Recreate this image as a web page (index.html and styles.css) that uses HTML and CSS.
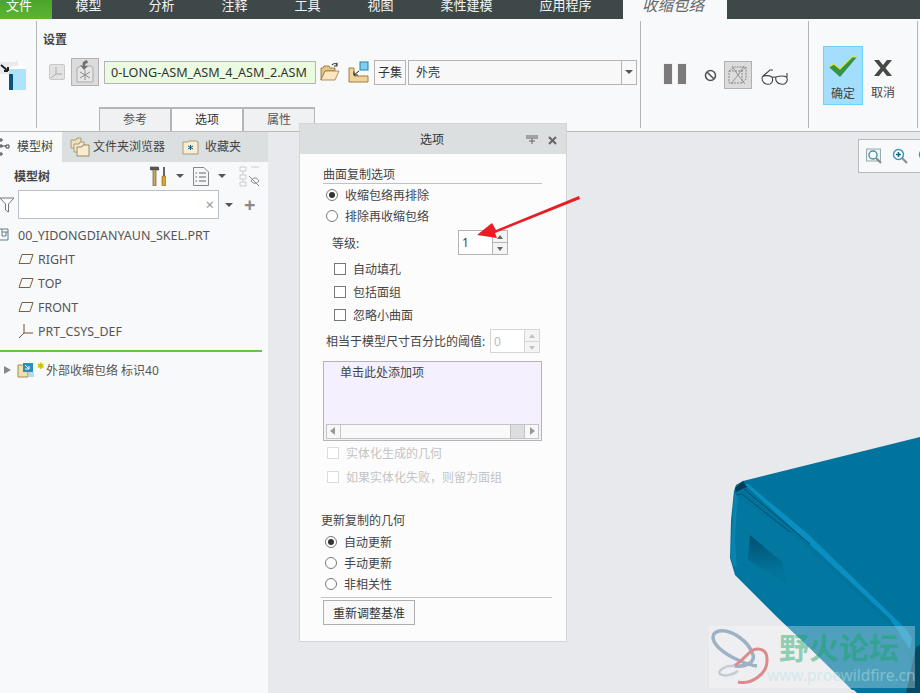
FILE: index.html
```html
<!DOCTYPE html>
<html lang="zh">
<head>
<meta charset="utf-8">
<title>收缩包络</title>
<link rel="stylesheet" href="styles.css">
</head>
<body>
<div class="app">
  <nav class="topbar">
    <span class="tab file">文件</span>
    <span class="tab">模型</span>
    <span class="tab">分析</span>
    <span class="tab">注释</span>
    <span class="tab">工具</span>
    <span class="tab">视图</span>
    <span class="tab">柔性建模</span>
    <span class="tab">应用程序</span>
    <span class="tab active">收缩包络</span>
  </nav>

  <section class="ribbon">
    <div class="group g-first">
      <svg width="26" height="32" viewBox="0 0 26 32" class="first-icon">
        <path d="M0 2H15L18 0V10H9V14H0Z" fill="#e9ebec"/>
        <path d="M1 5L8 11M8 11V7M8 11H4" stroke="#222" stroke-width="2" fill="none"/>
        <rect x="9" y="9" width="17" height="21" fill="#ade3fb"/>
        <rect x="9" y="14" width="4" height="16" fill="#0b5478"/>
        <path d="M9 9L13 6H26V9Z" fill="#fff"/>
      </svg>
    </div>
    <div class="group g-settings">
      <h3 class="g-title">设置</h3>
      <div class="ref-row">
        <svg class="ic-axis" width="16" height="16" viewBox="0 0 16 16">
          <rect x=".5" y=".5" width="15" height="15" rx="1.5" fill="#e2e2e2" stroke="#c8c8c8"/>
          <path d="M7 3V10L2 14M7 10H13" stroke="#aaa" fill="none"/>
        </svg>
        <span class="tool-btn">
          <svg width="20" height="24" viewBox="0 0 20 24">
            <path d="M2 8L6 6H16L18 8V22H2Z" fill="#e6e6e6" stroke="#aaa"/>
            <path d="M10 10V20M5 12L15 18M15 12L5 18" stroke="#8d8d8d" fill="none"/>
            <path d="M12 0C8 1 7 3 8 6L5 5L9 10L13 6L10 6C10 4 11 3 13 3Z" fill="#707070"/>
          </svg>
        </span>
        <span class="ref-input">0-LONG-ASM_ASM_4_ASM_2.ASM</span>
        <svg class="ic-open" width="20" height="20" viewBox="0 0 20 20">
          <path d="M1 18V6H3L4 4H9L10 6H15V9H5Z" fill="#e8c486" stroke="#8d6c34" stroke-width=".8"/>
          <path d="M1 18L5 9H19L15 18Z" fill="#fbe7c2" stroke="#9a7a3e" stroke-width=".8"/>
          <path d="M12 3C14 1 16 1 17 3M17 0.8V4H14" fill="none" stroke="#333" stroke-width="1.1"/>
        </svg>
        <svg class="ic-shrink" width="21" height="22" viewBox="0 0 21 22">
          <path d="M1 21V7H6V15H20V21Z" fill="#f1d39e" stroke="#a07f44"/>
          <rect x="12" y="1" width="8" height="8" fill="#7fcdf0" stroke="#2f7fa5"/>
          <path d="M11 10L6 14M6 10.5V14H10" fill="none" stroke="#222"/>
        </svg>
        <span class="subset">子集</span>
        <span class="select">外壳<i class="select-btn"></i></span>
      </div>
      <div class="sub-tabs">
        <span class="sub-tab">参考</span>
        <span class="sub-tab current">选项</span>
        <span class="sub-tab">属性</span>
      </div>
    </div>
    <div class="group g-state">
      <span class="pause"><i></i><i></i></span>
      <svg class="ic-no" width="13" height="13" viewBox="0 0 13 13">
        <circle cx="6.5" cy="6.5" r="5" fill="none" stroke="#555" stroke-width="1.6"/>
        <path d="M3 3L10 10" stroke="#555" stroke-width="1.6"/>
      </svg>
      <span class="tool-btn state-btn">
        <svg width="20" height="20" viewBox="0 0 20 20">
          <path d="M1 6L6 2H18V14L14 18H1ZM1 6H14V18M14 6L18 2" fill="none" stroke="#888" stroke-dasharray="2 1"/>
          <path d="M4 1L10 10L16 1M3 19L10 10L17 19" fill="none" stroke="#777" stroke-width=".7"/>
        </svg>
      </span>
      <svg class="ic-glass" width="28" height="18" viewBox="0 0 28 18">
        <path d="M1 10C1 7 8 7 11 9C12 11 12 15 9 16C5 17 1 15 1 10ZM15 9C18 8 25 7 26 10C27 14 24 17 20 16C16 16 14 12 15 9ZM11 9.500C12 9 14 9 15 9.500M2 8L9 2H12M26 9V5" fill="#f7f9fb" stroke="#444" stroke-width="1.100"/>
      </svg>
    </div>
    <div class="group g-finish">
      <button class="big-btn ok">
        <svg width="30" height="22" viewBox="0 0 30 22">
          <path d="M1 11L6 8L12 13L24 1H29L12 21Z" fill="#369149"/>
          <path d="M1 11L6 8L12 13L24 1H29" fill="none" stroke="#d9e63a" stroke-width="1.200"/>
        </svg>
        <span>确定</span>
      </button>
      <button class="big-btn cancel">
        <svg width="20" height="16" viewBox="0 0 20 16">
          <path d="M1 0H6L10 5L14 0H19L12.500 8L19 16H14L10 11L6 16H1L7.500 8Z" fill="#484848"/>
        </svg>
        <span>取消</span>
      </button>
    </div>
  </section>

  <main class="main">
    <aside class="panel">
      <div class="panel-tabs">
        <span class="ptab on">
          <svg class="ic-tree" width="10" height="22" viewBox="0 0 10 22">
            <path d="M0 3H2V5H0ZM0 9H2V11H0ZM0 17H2V19H0Z M6 9H9V12H6Z" fill="none" stroke="#444"/>
            <path d="M2 10H6" stroke="#444"/>
          </svg>模型树</span>
        <span class="ptab">
          <svg class="ic-folders" width="20" height="20" viewBox="0 0 20 20">
            <path d="M1 3H6L7 1H11V11H1Z" fill="#f0e2c0" stroke="#a89a7a"/>
            <path d="M4 7H9L10 5H14V15H4Z" fill="#f4e8cc" stroke="#a89a7a"/>
            <path d="M7 10H12L13 8H19V19H7Z" fill="#f7ecd0" stroke="#9a8a66"/>
          </svg>文件夹浏览器</span>
        <span class="ptab">
          <svg class="ic-fav" width="17" height="15" viewBox="0 0 17 15">
            <path d="M1 2H6L7 1H14L16 2V14H1Z" fill="#fbeed0" stroke="#a89a7a"/>
            <path d="M8.500 5V10M6 6L11 9M11 6L6 9" stroke="#0a5d8f"/>
          </svg>收藏夹</span>
      </div>
      <div class="tree-head">
        <strong class="tree-title">模型树</strong>
        <svg class="ic-tools" width="16" height="20" viewBox="0 0 16 20">
          <path d="M0 1H8L9 4H6V20H3V4H1Z" fill="#c9a864" stroke="#6d5a35" stroke-width=".7"/>
          <path d="M0 1H9V4H0Z" fill="#555"/>
          <rect x="13" y="1" width="2" height="10" fill="#666"/>
          <rect x="12" y="10" width="4" height="10" rx="1" fill="#d9a632" stroke="#7a5b1a" stroke-width=".6"/>
        </svg>
        <i class="caret c1"></i>
        <svg class="ic-doc" width="16" height="19" viewBox="0 0 16 19">
          <path d="M.5.5H11L15.500 5V18.500H.5Z" fill="#f4f6f7" stroke="#888"/>
          <path d="M6 6H13M6 10H13M6 14H13M2.500 6H4M2.500 10H4M2.500 14H4" stroke="#666"/>
        </svg>
        <i class="caret c2"></i>
        <svg class="ic-hide" width="21" height="21" viewBox="0 0 21 21">
          <path d="M1 1H7V5H1ZM1 9H7V13H1ZM1 16H7V20H1ZM12 1H20M4 5V9M4 13V16" fill="none" stroke="#ccc"/>
          <path d="M12 15C14 11 18 11 20 15C18 18 14 18 12 15ZM10 10L20 20" fill="none" stroke="#8a8f92"/>
        </svg>
      </div>
      <div class="filter-row">
        <svg class="ic-funnel" width="14" height="16" viewBox="0 0 14 16">
          <path d="M0 1H14L8.500 7V15L5.500 13V7Z" fill="#fdfdfd" stroke="#777"/>
        </svg>
        <span class="filter-input"><span class="x">×</span></span>
        <i class="caret c3"></i>
        <span class="plus">+</span>
      </div>
      <ul class="tree">
        <li class="root">
          <svg width="10" height="14" viewBox="0 0 10 14" class="ic-part">
            <path d="M0 1H9V12H0M3 4H9M3 1V8H7V4" fill="none" stroke="#607d8b"/>
          </svg>00_YIDONGDIANYAUN_SKEL.PRT</li>
        <li><svg class="ic-plane" width="16" height="10" viewBox="0 0 16 10"><path d="M4 .5H15L12 9.500H1Z" fill="none" stroke="#7a6238"/></svg>RIGHT</li>
        <li><svg class="ic-plane" width="16" height="10" viewBox="0 0 16 10"><path d="M4 .5H15L12 9.500H1Z" fill="none" stroke="#7a6238"/></svg>TOP</li>
        <li><svg class="ic-plane" width="16" height="10" viewBox="0 0 16 10"><path d="M4 .5H15L12 9.500H1Z" fill="none" stroke="#7a6238"/></svg>FRONT</li>
        <li><svg class="ic-plane" width="16" height="16" viewBox="0 0 16 16"><path d="M6 1V10L1 15M6 10H15" fill="none" stroke="#6b5530"/></svg>PRT_CSYS_DEF</li>
      </ul>
      <div class="insert-line"></div>
      <div class="feature">
        <i class="expand"></i>
        <svg class="ic-feat" width="18" height="16" viewBox="0 0 18 16">
          <path d="M1 3H11V15H1Z" fill="#f3dfae" stroke="#a58a52"/>
          <rect x="6" y="1" width="10" height="9" fill="#2b8fbf"/>
          <rect x="12" y="10" width="5" height="5" fill="#a9e0f6"/>
          <path d="M8 3L12 7M8 7H12V4" fill="none" stroke="#fff"/>
        </svg>
        <span class="star">✱</span><span class="feat-name">外部收缩包络 标识40</span>
      </div>
    </aside>

    <div class="canvas">
      <div class="view-tools">
        <svg width="16" height="16" viewBox="0 0 16 16">
          <rect x=".5" y="1" width="14" height="12" fill="#eef1f2" stroke="#9aa"/>
          <circle cx="7" cy="7" r="4" fill="#fff" stroke="#3f93b0" stroke-width="1.400"/>
          <path d="M10 10L15 15" stroke="#888" stroke-width="2"/>
        </svg>
        <svg width="16" height="16" viewBox="0 0 16 16">
          <circle cx="6.500" cy="6.500" r="5" fill="#fff" stroke="#3f93b0" stroke-width="1.400"/>
          <path d="M4 6.500H9M6.500 4V9" stroke="#0a6f94" stroke-width="1.600"/>
          <path d="M10 10L15 15" stroke="#888" stroke-width="2"/>
        </svg>
        <svg width="16" height="16" viewBox="0 0 16 16">
          <circle cx="6.500" cy="6.500" r="5" fill="#fff" stroke="#3f93b0" stroke-width="1.400"/>
          <path d="M10 10L15 15" stroke="#888" stroke-width="2"/>
        </svg>
      </div>
      <svg class="model" width="200" height="263" viewBox="720 430 200 263">
        <defs>
          <linearGradient id="recess" x1="0" y1="0" x2="0" y2="1">
            <stop offset="0" stop-color="#02506f"/>
            <stop offset=".75" stop-color="#02749c"/>
          </linearGradient>
        </defs>
        <path d="M920 437L743 481L736 485L734 491L731 520L730 558L735 575L777 617L857 693H920Z" fill="#00749d"/>
        <path d="M734 494L731 556L735 572L777 615L852 690H916L906 640L800 540Z" fill="#02779f"/>
        <path d="M734 494L738 494L735 540L737 566L733 566L731 556Z" fill="#0a83ad"/>
        <path d="M744 484L748 484L808 534L905 628L912 638L910 650L890 619L800 535Z" fill="#0a8fc0"/>
        <path d="M735 488L743 481L747 487L736 492Z" fill="#023f5a"/>
        <path d="M736 495L742 494L790 532" fill="none" stroke="#024f6f"/>
        <path d="M744 489L810 544" fill="none" stroke="#02435f" stroke-width=".8"/>
        <path d="M750 535L782 562L787 584L748 560Z" fill="url(#recess)"/>
        <path d="M916 647L920 645V693H906Z" fill="#034a66"/>
      </svg>
    </div>
  </main>

  <div class="dialog">
    <header class="dlg-title">
      <span class="dlg-name">选项</span>
      <svg class="ic-pin" width="12" height="10" viewBox="0 0 12 10">
        <path d="M0 1H12M0 3H12M6 3V9M3 6H9" stroke="#666"/>
      </svg>
      <svg class="ic-close" width="9" height="9" viewBox="0 0 9 9">
        <path d="M1 1L8 8M8 1L1 8" stroke="#666" stroke-width="2"/>
      </svg>
    </header>
    <div class="dlg-body">
      <div class="dlg-head">曲面复制选项</div>
      <label class="opt r1"><i class="radio on"></i>收缩包络再排除</label>
      <label class="opt r1"><i class="radio"></i>排除再收缩包络</label>
      <div class="level">
        <span class="level-label">等级:</span>
        <span class="spin"><span class="spin-val">1</span><span class="spin-btns"><i class="up"></i><i class="down"></i></span></span>
      </div>
      <label class="opt chk first-chk"><i class="box"></i>自动填孔</label>
      <label class="opt chk"><i class="box"></i>包括面组</label>
      <label class="opt chk"><i class="box"></i>忽略小曲面</label>
      <div class="thresh">
        <span class="thresh-label">相当于模型尺寸百分比的阈值:</span>
        <span class="spin off"><span class="spin-val">0</span><span class="spin-btns"><i class="up"></i><i class="down"></i></span></span>
      </div>
      <div class="listbox">
        <span class="list-text">单击此处添加项</span>
        <div class="hscroll">
          <i class="sb-btn left"></i><i class="sb-thumb"></i><i class="sb-track"></i><i class="sb-btn right"></i>
        </div>
      </div>
      <label class="opt dis"><i class="box"></i>实体化生成的几何</label>
      <label class="opt dis"><i class="box"></i>如果实体化失败，则留为面组</label>
      <div class="dlg-head2">更新复制的几何</div>
      <label class="opt r2"><i class="radio on"></i>自动更新</label>
      <label class="opt r2"><i class="radio"></i>手动更新</label>
      <label class="opt r2"><i class="radio"></i>非相关性</label>
      <div class="dlg-sep"></div>
      <button class="rebase">重新调整基准</button>
    </div>
  </div>

  <svg class="arrow" width="110" height="50" viewBox="475 192 110 50">
    <path d="M579 196L496 230L492 223L477 235L497 238L495 233L580 199Z" fill="#ea1c24"/>
  </svg>

  <div class="watermark">
    <svg class="wm-logo" width="60" height="58" viewBox="0 0 60 58">
      <path d="M46 37C38 36 20 30 8 19C0 11 0 4 8 2C20 0 38 12 42 26C44 33 36 38 24 37" fill="none" stroke="#9db2c4" stroke-width="3.500"/>
      <path d="M27 53C40 56 57 45 56 30C56 19 45 17 37 25C32 30 27 35 23 37" fill="none" stroke="#dc8b8c" stroke-width="3"/>
      <path d="M24 37C14 36 6 42 9 45C13 48 22 46 27 42" fill="none" stroke="#c2ccd6" stroke-width="2.500"/>
    </svg>
    <div class="wm-text">
      <div class="wm-cn">野火论坛</div>
      <div class="wm-url">www.proewildfire.cn</div>
    </div>
  </div>
</div>
</body>
</html>
```

FILE: styles.css
```css
* { box-sizing: border-box; }
html, body { margin: 0; padding: 0; }
body {
  font-family: "Noto Sans", "Noto Sans CJK SC", "Liberation Sans", sans-serif;
  font-size: 12px;
  color: #444;
  overflow: hidden;
  background: #e8e9ed;
}
i { display: block; font-style: normal; }
ul { list-style: none; margin: 0; padding: 0; }
h3 { margin: 0; }
svg { display: block; flex: none; }

.app { position: relative; width: 920px; height: 693px; overflow: hidden; display: flex; flex-direction: column; }

/* top tabs */
.topbar { height: 19px; background: #3f4849; display: flex; flex: none; }
.tab { padding: 0 23.500px; color: #f2f4f4; font-size: 13px; line-height: 10px; white-space: nowrap; }
.tab.file { width: 52px; padding: 0 0 0 6px; background: linear-gradient(#4aa528, #5cb434); color: #fff; }
.tab.active { margin-left: 8px; width: 104px; padding: 0 0 0 19px; background: #f8f9fb; color: #666; font-style: italic; font-size: 15.500px; line-height: 10px; }

/* ribbon */
.ribbon { height: 113px; flex: none; background: #f8f9fb; border-bottom: 1px solid #b9bcbd; display: flex; padding: 2px 0 3px; }
.group { border-right: 1px solid #b4b6b7; position: relative; flex: none; }
.g-first { width: 37px; padding-top: 39px; }
.g-settings { width: 604px; padding: 11px 0 0 0; }
.g-state { width: 168px; display: flex; align-items: flex-start; }
.g-finish { width: 109px; display: flex; align-items: flex-start; padding: 25px 0 0 14px; }

.g-title { font-size: 12px; font-weight: 700; line-height: 16px; margin-left: 6px; color: #444; }
.ref-row { display: flex; align-items: center; height: 28px; margin-top: 10px; padding-left: 12px; }
.tool-btn { display: flex; align-items: center; justify-content: center; background: #dcdcdc; border: 1px solid #b1b1b1; width: 28px; height: 28px; }
.ic-axis { margin-right: 6px; }
.ref-input { width: 212px; height: 23px; margin-left: 5px; border: 1px solid #b4b4b4; background: #ebfbdf; line-height: 21px; padding-left: 6px; color: #333; font-size: 12.600px; white-space: nowrap; }
.ic-open { margin-left: 4px; }
.ic-shrink { margin-left: 8px; }
.subset { width: 32px; height: 25px; margin-left: 5px; border: 1px solid #b4b4b4; text-align: center; line-height: 23px; color: #333; background: #f9f9f9; }
.select { position: relative; width: 229px; height: 25px; margin-left: 2px; border: 1px solid #b4b4b4; line-height: 23px; padding-left: 7px; color: #333; background: #f8f8f8; }
.select-btn { position: absolute; right: 0; top: 0; bottom: 0; width: 15px; border-left: 1px solid #b4b4b4; }
.select-btn::after { content: ""; position: absolute; left: 3px; top: 9px; border: 4px solid transparent; border-top: 4px solid #555; }

.sub-tabs { display: flex; margin: 21px 0 0 62px; }
.sub-tab { width: 72px; height: 24px; background: #f0f1f3; border: 2px solid #b4b6b7; border-bottom: 0; border-left-width: 1px; border-right-width: 1px; text-align: center; line-height: 22px; color: #555; }
.sub-tab.current { background: #fbfbfc; color: #333; }

.pause { display: flex; gap: 4px; margin: 42px 0 0 22px; }
.pause i { width: 10px; height: 22px; background: #7d7a7b; border: 1px solid #f0f0f0; }
.ic-no { margin: 48px 0 0 17px; }
.state-btn { margin: 40px 0 0 7px; }
.ic-glass { margin: 47px 0 0 9px; }

.big-btn { display: flex; flex-direction: column; align-items: center; font: inherit; color: #444; background: transparent; border: 1px solid transparent; padding: 9px 0 0; height: 59px; }
.big-btn span { margin-top: 8px; line-height: 16px; }
.ok { width: 40px; background: #a3defd; border-color: #6fd0fb; }
.cancel { width: 40px; padding-top: 13px; }
.cancel span { margin-top: 9px; }

/* main */
.main { flex: 1; display: flex; min-height: 0; }
.panel { width: 268px; flex: none; background: #f8f9fb; }
.canvas { flex: 1; position: relative; background: #e8e9ed; }

.panel-tabs { display: flex; height: 30px; background: #dbdfe0; align-items: stretch; }
.ptab { display: flex; align-items: center; line-height: 30px; color: #444; }
.ptab.on { width: 62px; background: #f8f9fb; }
.ic-tree { margin-right: 7px; }
.ic-folders { margin: 0 3px 0 8px; }
.ic-fav { margin: 0 6px 0 17px; }

.tree-head { position: relative; display: flex; align-items: center; height: 28px; padding: 0 0 0 14px; }
.tree-title { font-size: 12px; width: 136px; color: #444; }
.caret { width: 0; height: 0; border: 4px solid transparent; border-top: 4px solid #555; border-bottom: 0; }
.c1 { margin-left: 10px; }
.ic-doc { margin-left: 9px; }
.c2 { margin-left: 9px; }
.ic-hide { margin-left: 13px; }

.filter-row { display: flex; align-items: center; height: 29px; }
.filter-input { position: relative; width: 201px; height: 29px; margin-left: 4px; border: 1px solid #b8c0c3; background: #fff; }
.x { position: absolute; right: 4px; top: 3px; font-size: 15px; line-height: 20px; color: #999; }
.c3 { margin-left: 6px; }
.plus { margin-left: 11px; font-size: 20px; line-height: 20px; font-weight: 700; color: #8a8a8a; }

.tree { padding-top: 4px; }
.tree li { display: flex; align-items: center; height: 24px; padding-left: 38px; position: relative; color: #555; font-size: 12.400px; }
.tree .root { padding-left: 18px; font-size: 12.500px; }
.ic-part { position: absolute; left: -1px; top: 5px; }
.ic-plane { position: absolute; left: 18px; top: 7px; }
.tree li:last-child .ic-plane { top: 4px; }
.insert-line { height: 2px; width: 262px; margin-top: 7px; background: #63c342; }
.feature { display: flex; align-items: center; height: 24px; margin-top: 6px; padding-left: 4px; color: #555; }
.feat-name { margin-left: 1px; white-space: nowrap; }
.expand { width: 0; height: 0; border: 4px solid transparent; border-left: 7px solid #888; border-right: 0; }
.ic-feat { margin-left: 6px; }
.star { color: #c7c000; font-size: 9px; line-height: 10px; align-self: flex-start; margin: 3px 0 0 2px; }

.view-tools { position: absolute; left: 590px; top: 7px; width: 70px; height: 34px; background: #f8f9fb; border: 1px solid #b7b9ba; border-right: 0; display: flex; gap: 10px; align-items: center; padding-left: 7px; }
.model { position: absolute; left: 452px; top: 298px; }

/* dialog */
.dialog { position: absolute; left: 299px; top: 123px; width: 268px; height: 519px; background: #fcfcfc; border: 1px solid #d2d6d8; }
.dlg-title { position: relative; height: 30px; background: #dcdfe0; line-height: 32px; color: #333; }
.dlg-name { display: block; margin-left: 120px; }
.ic-pin { position: absolute; left: 226px; top: 11px; }
.ic-close { position: absolute; left: 248px; top: 12px; }
.dlg-body { padding: 12px 0 0 21px; }
.dlg-head { width: 219px; height: 18px; margin-left: 2px; border-bottom: 1px solid #bfc1c2; line-height: 18px; color: #444; }
.opt { display: flex; align-items: center; white-space: nowrap; color: #444; }
.r1 { height: 21px; padding-left: 5px; }
.r2 { height: 21px; padding-left: 4px; }
.radio { width: 12px; height: 12px; margin-right: 7px; border-radius: 50%; border: 1px solid #777; background: #fff; position: relative; }
.radio.on::after { content: ""; position: absolute; left: 2px; top: 2px; width: 6px; height: 6px; border-radius: 50%; background: #333; }
.box { width: 12px; height: 12px; margin-right: 7px; border: 1px solid #777; background: #fff; }
.level { display: flex; align-items: center; height: 25px; margin-top: 4px; padding-left: 11px; }
.level-label { width: 126px; }
.spin { display: flex; width: 50px; height: 25px; border: 1px solid #b4b4b4; background: #fff; }
.spin-val { flex: 1; padding-left: 3px; line-height: 23px; color: #444; }
.spin-btns { width: 15px; border-left: 1px solid #b4b4b4; display: flex; flex-direction: column; }
.spin-btns i { flex: 1; position: relative; background: #f4f4f4; }
.spin-btns .down { border-top: 1px solid #b4b4b4; }
.up::after, .down::after { content: ""; position: absolute; left: 4px; top: 4px; border: 3px solid transparent; border-top: 0; border-bottom: 4px solid #666; }
.down::after { border-bottom: 0; border-top: 4px solid #666; }
.chk { height: 23px; padding-left: 13px; }
.first-chk { margin-top: 2px; }
.thresh { display: flex; align-items: center; height: 24px; margin-top: 3px; padding-left: 5px; color: #444; }
.thresh-label { width: 164px; white-space: nowrap; }
.spin.off { height: 24px; border-color: #d6d6d6; }
.spin.off .spin-val { color: #bbb; }
.spin.off .spin-btns { border-color: #d6d6d6; }
.spin.off .down { border-color: #d6d6d6; }
.spin.off .up::after { border-bottom-color: #c4c4c4; }
.spin.off .down::after { border-top-color: #c4c4c4; }
.listbox { display: flex; flex-direction: column; justify-content: space-between; width: 219px; height: 80px; margin: 8px 0 0 2px; border: 1px solid #b4b4b4; background: #f4f0fe; padding: 0 1px 1px; }
.list-text { padding: 3px 0 0 15px; line-height: 16px; color: #444; }
.hscroll { display: flex; height: 15px; background: #f8f8f8; border: 1px solid #c4c4c4; margin: 0 1px; }
.sb-btn { width: 14px; position: relative; }
.sb-btn.left { border-right: 1px solid #c4c4c4; }
.sb-btn.right { border-left: 1px solid #c4c4c4; }
.sb-btn::after { content: ""; position: absolute; top: 2px; left: 3px; border: 4px solid transparent; border-left: 0; border-right: 5px solid #999; }
.sb-btn.right::after { border-right: 0; border-left: 5px solid #999; left: 5px; }
.sb-thumb { width: 169px; background: #f9f9f9; }
.sb-track { flex: 1; background: #dcdee0; border-left: 1px solid #c4c4c4; }
.dis { height: 24px; padding-left: 6px; color: #c4c4c4; }
.dis .box { border-color: #dcdcdc; }
.dlg-head2 { height: 16px; margin-top: 24px; margin-bottom: 2px; line-height: 16px; color: #444; }
.dlg-sep { width: 231px; height: 1px; margin-top: 3px; background: #c4c4c4; }
.rebase { display: block; width: 92px; height: 25px; margin: 2px 0 0 2px; padding: 0; font: inherit; color: #333; background: #f9f9f9; border: 1px solid #aeaeae; }

/* overlays */
.arrow { position: absolute; left: 475px; top: 192px; }
.watermark { position: absolute; left: 709px; top: 626px; width: 206px; height: 62px; background: rgba(255, 255, 255, .3); display: flex; }
.wm-logo { margin: 3px 0 0 2px; }
.wm-text { margin-left: 8px; white-space: nowrap; }
.wm-cn { margin: 5px 0 0 0; font-size: 30px; line-height: 30px; font-weight: 700; color: rgba(20, 165, 95, .45); font-family: "Noto Sans CJK SC", sans-serif; }
.wm-url { margin: 4px 0 0 -12px; font-size: 15.500px; line-height: 20px; color: rgba(180, 225, 225, .5); }
```
